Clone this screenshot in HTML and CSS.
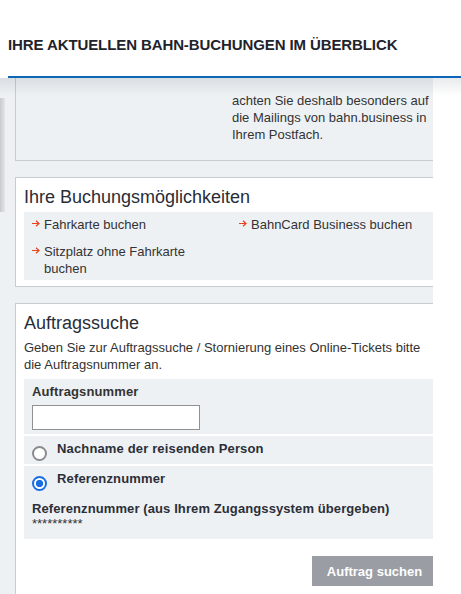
FILE: index.html
```html
<!DOCTYPE html>
<html lang="de">
<head>
<meta charset="utf-8">
<title>Bahn-Buchungen</title>
<link rel="stylesheet" href="styles.css">
</head>
<body>
<header class="topbar">
  <h1 class="topbar-title">IHRE AKTUELLEN BAHN-BUCHUNGEN IM ÜBERBLICK</h1>
</header>
<main class="content">
  <section class="box box-info">
    <p class="info-text">achten Sie deshalb besonders auf<br>die Mailings von bahn.business in<br>Ihrem Postfach.</p>
  </section>

  <section class="box box-white">
    <h2 class="box-title">Ihre Buchungsmöglichkeiten</h2>
    <ul class="panel link-grid">
      <li class="link-item"><span class="arrow"><svg width="8" height="7" viewBox="0 0 8 7"><path d="M0 3.5H7M4 0.7L7 3.5L4 6.3" fill="none" stroke="#e8421f" stroke-width="1.2"/></svg></span><span>Fahrkarte buchen</span></li>
      <li class="link-item"><span class="arrow"><svg width="8" height="7" viewBox="0 0 8 7"><path d="M0 3.5H7M4 0.7L7 3.5L4 6.3" fill="none" stroke="#e8421f" stroke-width="1.2"/></svg></span><span>BahnCard Business buchen</span></li>
      <li class="link-item"><span class="arrow"><svg width="8" height="7" viewBox="0 0 8 7"><path d="M0 3.5H7M4 0.7L7 3.5L4 6.3" fill="none" stroke="#e8421f" stroke-width="1.2"/></svg></span><span>Sitzplatz ohne Fahrkarte buchen</span></li>
    </ul>
  </section>

  <section class="box box-white box-search">
    <h2 class="box-title">Auftragssuche</h2>
    <p class="search-text">Geben Sie zur Auftragssuche / Stornierung eines Online-Tickets bitte die Auftragsnummer an.</p>
    <div class="panel field">
      <label class="field-label" for="order">Auftragsnummer</label>
      <input class="field-input" id="order" type="text">
    </div>
    <div class="panel option">
      <label class="option-row"><input class="radio" type="radio" name="mode"><span class="option-label">Nachname der reisenden Person</span></label>
    </div>
    <div class="panel option">
      <label class="option-row"><input class="radio" type="radio" name="mode" checked><span class="option-label">Referenznummer</span></label>
      <div class="ref-label">Referenznummer (aus Ihrem Zugangssystem übergeben)</div>
      <div class="ref-value">**********</div>
    </div>
    <div class="actions">
      <button class="btn" type="button">Auftrag suchen</button>
    </div>
  </section>
</main>
</body>
</html>
```

FILE: styles.css
```css
html, body {
  margin: 0;
  padding: 0;
  background: #ffffff;
  overflow: hidden;
  height: 594px;
}
body {
  font-family: "Liberation Sans", Arial, sans-serif;
  font-size: 13px;
  line-height: 17px;
  color: #333333;
}
.topbar {
  position: relative;
  background: #ffffff;
  padding-left: 8px;
}
.topbar::after {
  content: "";
  position: absolute;
  left: 0;
  right: 0;
  top: 78px;
  height: 18px;
  background: linear-gradient(to bottom, rgba(40, 50, 70, 0.10), rgba(40, 50, 70, 0));
  z-index: 2;
}
.topbar-title {
  margin: 0;
  padding: 36px 0 22px;
  font-size: 15px;
  line-height: 18px;
  font-weight: bold;
  letter-spacing: -0.1px;
  color: #1f232b;
  border-bottom: 2px solid #0c68b7;
}
.content {
  width: 418px;
  padding-left: 15px;
  height: 516px;
  overflow: hidden;
  background:
    linear-gradient(to right, #c9cacc, #e3e5e8) 0 20px / 5px 114px no-repeat,
    #eef1f4;
}
.box {
  border: 1px solid #c8cbd0;
  border-right: 0;
}
.box-info {
  border-top: 0;
  padding: 14px 0 17px 216px;
}
.info-text {
  margin: 0;
}
.box-white {
  background: #ffffff;
  margin-top: 16px;
  padding: 8px 0 6px 8px;
}
.box-title {
  margin: 0 0 4px;
  padding-top: 1px;
  font-size: 18px;
  line-height: 21px;
  font-weight: normal;
  color: #282d37;
}
.panel {
  background: #eef1f4;
}
.link-grid {
  list-style: none;
  margin: 0;
  padding: 4px 0 3px 8px;
  display: grid;
  grid-template-columns: 175px 1fr;
  column-gap: 32px;
  row-gap: 10px;
}
.link-item {
  display: flex;
  gap: 4px;
}
.arrow {
  flex: none;
  width: 8px;
  padding-top: 4px;
  line-height: 0;
}
.box-search {
  padding-bottom: 40px;
}
.search-text {
  margin: 0 0 6px;
  padding-top: 1px;
  padding-right: 8px;
}
.field {
  padding: 4px 8px 4px;
}
.field-label {
  display: block;
  font-weight: bold;
  letter-spacing: 0.12px;
  margin-bottom: 5px;
}
.field-input {
  display: block;
  box-sizing: border-box;
  width: 168px;
  height: 25px;
  margin: 0;
  border: 1px solid #8f9194;
  border-radius: 0;
  background: #ffffff;
  font: inherit;
  padding: 2px 4px;
}
.option {
  margin-top: 2px;
  padding: 4px 8px 3px;
}
.option-row {
  display: flex;
  gap: 10px;
  font-weight: bold;
  letter-spacing: 0.15px;
  color: #2b2f38;
}
.radio {
  appearance: none;
  -webkit-appearance: none;
  flex: none;
  box-sizing: border-box;
  width: 15px;
  height: 15px;
  margin: 6px 0 0;
  border: 2px solid #8a8b8e;
  border-radius: 50%;
  background: #ffffff;
}
.radio:checked {
  border-color: #1a6ee0;
  background: radial-gradient(circle, #1a6ee0 0 3.4px, #ffffff 3.9px);
}
.ref-label {
  margin-top: 9px;
  font-weight: bold;
  letter-spacing: 0.1px;
  color: #2b2f38;
}
.ref-value {
  margin-top: -2px;
  padding-bottom: 4px;
}
.actions {
  display: flex;
  justify-content: flex-end;
  margin-top: 17px;
}
.btn {
  width: 121px;
  height: 30px;
  border: 0;
  border-radius: 0;
  background: #9a9da4;
  color: #ffffff;
  font-family: "Liberation Sans", Arial, sans-serif;
  font-size: 13px;
  font-weight: bold;
  padding: 0 0 0 4px;
}
```
